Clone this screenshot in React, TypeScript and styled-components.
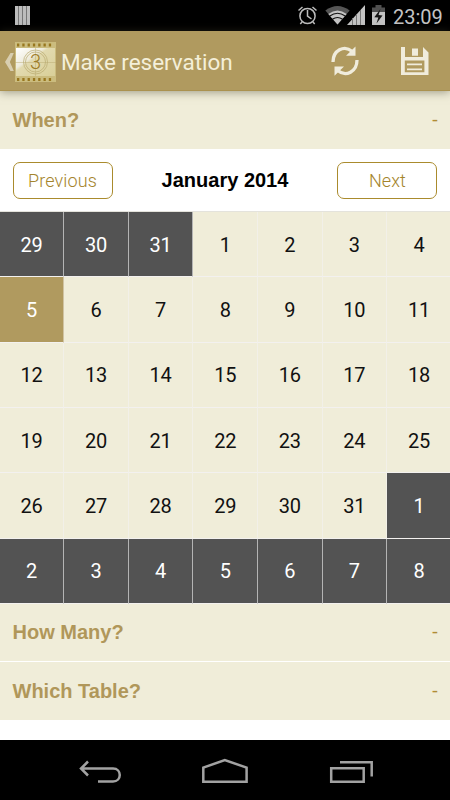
import React from "react";
import styled, { createGlobalStyle } from "styled-components";

const GlobalStyle = createGlobalStyle`
  * { box-sizing: border-box; }
  body { margin: 0; background: #fff; font-family: Roboto, sans-serif; }
`;

const Screen = styled.main`
  width: 450px;
  height: 800px;
  overflow: hidden;
  display: flex;
  flex-direction: column;
  background: #fff;
`;

const StatusBar = styled.div`
  height: 31px;
  flex: none;
  display: flex;
  justify-content: space-between;
  background: #000;
`;

const StatusRight = styled.div`
  display: flex;
  padding-right: 7px;
`;

const Clock = styled.time`
  width: 50px;
  font-size: 20px;
  line-height: 34px;
  color: #c4c4c4;
  white-space: nowrap;
`;

const ActionBar = styled.header`
  height: 60px;
  flex: none;
  display: flex;
  align-items: center;
  background: #b09a5f;
  border-bottom: 1px solid #aa914f;
  box-shadow: 0 1px 9px rgba(70, 65, 45, 0.5);
  z-index: 1;
`;

const Title = styled.h1`
  flex: 1;
  margin: 2px 0 0 5px;
  font-size: 22.5px;
  font-weight: 400;
  letter-spacing: -0.05px;
  line-height: 30px;
  color: #f4efd9;
`;

const Actions = styled.div`
  display: flex;
  gap: 40px;
  padding-right: 21px;
`;

const SectionHeader = styled.button<{ $divided?: boolean }>`
  height: 58px;
  flex: none;
  display: flex;
  align-items: center;
  justify-content: space-between;
  padding: 0 12px ${(p) => (p.$divided ? "2px" : "0")} 12.5px;
  border: 0;
  border-bottom: ${(p) => (p.$divided ? "1px solid #fff" : "0")};
  background: #f0edd9;
  color: #b0975a;
  font: 700 20px/24px "Liberation Sans", Arial, sans-serif;
`;

const Toggle = styled.span`
  font-size: 19px;
  font-weight: 400;
  color: #b08c35;
`;

const MonthBar = styled.nav`
  height: 62px;
  flex: none;
  display: flex;
  align-items: center;
  justify-content: space-between;
  padding: 1px 12.5px 0;
`;

const MonthButton = styled.button`
  width: 100px;
  height: 37px;
  padding: 1px 0 0;
  border: 1px solid #aa8b2d;
  border-radius: 7px;
  background: #fff;
  color: #a4842c;
  font: 300 18px/22px Roboto, sans-serif;
  letter-spacing: 0.1px;
`;

const MonthName = styled.h2`
  margin: 0 0 2px;
  color: #000;
  font: 700 20px/24px "Liberation Sans", Arial, sans-serif;
`;

const Calendar = styled.div`
  width: 452px;
  height: 393px;
  flex: none;
  display: grid;
  grid-template-columns: 64.2px repeat(6, 64.6px);
  grid-template-rows: repeat(6, 65.33px);
  border-top: 1px solid #e4e3dc;
`;

type Kind = "outside" | "selected" | "day";

const fills: Record<Kind, string> = { outside: "#535353", selected: "#b09a5f", day: "#f0edd9" };
const lines: Record<Kind, string> = { outside: "#b4b4b4", selected: "#d0c3a3", day: "#f2f0e8" };

const Day = styled.div<{ $kind: Kind }>`
  display: flex;
  align-items: center;
  justify-content: center;
  padding-top: 1px;
  border-right: 1px solid ${(p) => lines[p.$kind]};
  border-bottom: 1px solid #f3f1ef;
  background: ${(p) => fills[p.$kind]};
  color: ${(p) => (p.$kind === "day" ? "#111" : "#fff")};
  font-size: 20px;
  letter-spacing: -0.2px;
`;

const Spacer = styled.div`
  flex: 1;
`;

const SystemNav = styled.footer`
  height: 60px;
  flex: none;
  display: flex;
  align-items: center;
  justify-content: center;
  background: #000;
`;

const Icon = styled.svg`
  display: block;
  flex: none;
`;

const holes = [2, 7.3, 12.6, 17.9, 23.2, 28.5, 33.8];

function AppLogo() {
  return (
    <Icon width="56" height="58" viewBox="0 0 56 58">
      <defs>
        <linearGradient id="film" x1="0" y1="0" x2="1" y2="1">
          <stop offset="0" stopColor="#fff" />
          <stop offset=".36" stopColor="#eeebdc" />
          <stop offset=".42" stopColor="#e2daaf" />
          <stop offset="1" stopColor="#d9cf98" />
        </linearGradient>
      </defs>
      <path d="M10.5 21h3.3L9.9 30l3.9 9h-3.3L5 30z" fill="#d8ceb0" />
      <g transform="translate(15 10)">
        <path d="M0 0h41v40H0z" fill="#cbbc7e" />
        <path d="M1 6h39v28H1z" fill="url(#film)" />
        {holes.map((x) => (
          <path key={x} d={`M${x} 1.5h2.3v3H${x}zM${x} 36h2.3v3H${x}z`} fill="#98771f" />
        ))}
        <g fill="none" stroke="#b9aa70" strokeWidth=".7">
          <path d="M0 20.5h41M20.5 6v28" opacity=".65" />
          <circle cx="20.5" cy="20" r="12" />
          <circle cx="20.5" cy="20" r="10" />
        </g>
        <text x="20.5" y="27" fill="#9c7c27" fontFamily="Roboto, sans-serif" fontSize="20" fontWeight="300" textAnchor="middle">3</text>
      </g>
    </Icon>
  );
}

function RefreshIcon() {
  return (
    <Icon width="30" height="32" viewBox="0 0 30 32">
      <g fill="none" stroke="#f0ecdc" strokeWidth="3.3">
        <path d="M3 17C3 5.5 14-.5 22.3 6.5" />
        <path d="M27 15C27 26.5 16 32.5 7.7 25.5" />
      </g>
      <path d="M25.5 1.5v9.2H16zM4.5 30.8V21.5H14z" fill="#f0ecdc" />
    </Icon>
  );
}

function SaveIcon() {
  return (
    <Icon width="29" height="32" viewBox="0 0 29 32">
      <path
        fillRule="evenodd"
        fill="#f0ecdc"
        d="M1 2h4v10h18V2l5.5 5.5V30H1zM4.8 15.5v11.7h19.6V15.5z"
      />
      <path d="M12 3.5h6v7.3h-6zM7 18.5h15v1.7H7zM7 23.5h15v1.7H7z" fill="#f0ecdc" />
    </Icon>
  );
}

function NotificationIcon() {
  return (
    <Icon width="40" height="31" viewBox="0 0 40 31">
      <path d="M15 6h15v19H15z" fill="#777" />
      <path d="M15 6h3v19h-3zM19 6h3v19h-3zM23 6h3v19h-3zM27 6h3v19h-3z" fill="#bdbdbd" />
    </Icon>
  );
}

function StatusIcons() {
  return (
    <Icon width="95" height="31" viewBox="298 0 95 31">
      <g fill="none" stroke="#bcbcbc" strokeWidth="1.5">
        <circle cx="307.5" cy="16" r="7.6" />
        <path d="M307.5 10v6l4 3M298.5 10.5l4-3.5M312.5 7l4 3.5M302 22l-1.7 2M313 22l1.7 2" />
      </g>
      <path d="M325.3 10.5Q337.5 1.5 349.7 10.5L337.5 24.5z" fill="#555" />
      <path d="M328.3 14Q337.5 7 346.7 14L337.5 24.5z" fill="#c4c4c4" />
      <g fill="none" stroke="#111" strokeWidth="1.1">
        <path d="M329.8 16Q337.5 10.5 345.2 16M332.4 19.2Q337.5 15.8 342.6 19.2" />
      </g>
      <path d="M365 5v20h-18z" fill="#c4c4c4" />
      <path d="M352.5 18v7M356.5 14v11M360.5 10v15" stroke="#777" strokeWidth="1" />
      <path d="M375.5 5h6v2.5h3.5V12h-13V7.5h3.5z" fill="#505050" />
      <path d="M372 12h13v13h-13z" fill="#c4c4c4" />
      <path d="M380.5 9l-6.2 8.2 4 .4-1.8 5.9 6-8-4-.4z" fill="#161616" />
    </Icon>
  );
}

function NavigationIcons() {
  return (
    <Icon width="450" height="60" viewBox="0 0 450 60" fill="none" stroke="#a2a2a2" strokeWidth="2.5">
      <path d="M81 28.5h32c9 0 9 13 0 13H98M88 21.5l-7 7 7 7" />
      <path d="M203.3 41.8V27.6l21.5-7.5 21.8 7.5v14.2z" />
      <path d="M331.2 28.3h32.5v13.5h-32.5zM340 22.3h31.7v14.3" />
    </Icon>
  );
}

const days = Array.from({ length: 42 }, (_, i) => {
  const kind: Kind = i < 3 || i > 33 ? "outside" : i === 7 ? "selected" : "day";
  const date = i < 3 ? 29 + i : i > 33 ? i - 33 : i - 2;
  return { date, kind };
});

export default function App() {
  return (
    <>
      <GlobalStyle />
      <Screen>
        <StatusBar>
          <NotificationIcon />
          <StatusRight>
            <StatusIcons />
            <Clock>23:09</Clock>
          </StatusRight>
        </StatusBar>
        <ActionBar>
          <AppLogo />
          <Title>Make reservation</Title>
          <Actions>
            <RefreshIcon />
            <SaveIcon />
          </Actions>
        </ActionBar>
        <SectionHeader>When?<Toggle>-</Toggle></SectionHeader>
        <MonthBar>
          <MonthButton>Previous</MonthButton>
          <MonthName>January 2014</MonthName>
          <MonthButton>Next</MonthButton>
        </MonthBar>
        <Calendar>
          {days.map((day, i) => (
            <Day key={i} $kind={day.kind}>{day.date}</Day>
          ))}
        </Calendar>
        <SectionHeader $divided>How Many?<Toggle>-</Toggle></SectionHeader>
        <SectionHeader>Which Table?<Toggle>-</Toggle></SectionHeader>
        <Spacer />
        <SystemNav><NavigationIcons /></SystemNav>
      </Screen>
    </>
  );
}
